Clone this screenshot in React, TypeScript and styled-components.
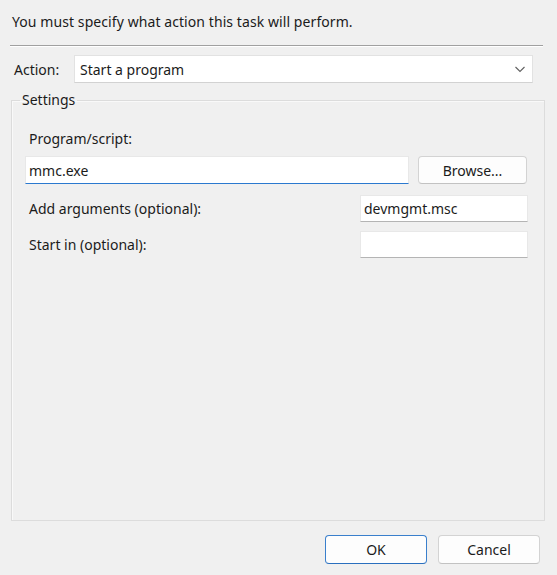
import styled, { createGlobalStyle } from 'styled-components'

const GlobalStyle = createGlobalStyle`
	html, body {
		margin: 0;
		padding: 0;
		background: #f0f0f0;
	}
	body {
		font-family: 'Noto Sans', 'Open Sans', sans-serif;
		font-size: 14px;
		color: #1b1b1b;
	}
`

const Page = styled.div`
	width: 557px;
	height: 575px;
	box-sizing: border-box;
	padding-top: 12px;
	display: flex;
	flex-direction: column;
	background: #f0f0f0;
`

const Intro = styled.div`
	margin-left: 12px;
	height: 20px;
	line-height: 20px;
	letter-spacing: 0.08px;
`

const Rule = styled.div`
	margin: 13px 14px 0 10px;
	height: 1px;
	background: #a0a0a0;
	border-bottom: 1px solid #ffffff;
`

const ActionRow = styled.div`
	display: flex;
	align-items: center;
	margin-top: 8px;
	height: 28px;
`

const ActionLabel = styled.span`
	width: 60px;
	margin-left: 14px;
`

const Dropdown = styled.div`
	width: 459px;
	height: 28px;
	box-sizing: border-box;
	display: flex;
	align-items: center;
	justify-content: space-between;
	padding: 0 6px 0 5px;
	background: #ffffff;
	border: 1px solid #e2e2e2;
	border-bottom-color: #d2d2d2;
`

const Chevron = styled.svg`
	width: 12px;
	height: 12px;
`

const GroupBox = styled.fieldset`
	flex: 1;
	margin: 8px 12px 0 11px;
	padding: 0;
	min-width: 0;
	border: 1px solid #dcdcdc;
	box-shadow: inset 1px 1px 0 #f9f9f9;
`

const Legend = styled.legend`
	margin-left: 8px;
	padding: 0 2px;
	line-height: 18px;
`

const FieldLabel = styled.div<{ $top: number }>`
	margin: ${({ $top }) => $top}px 0 0 17px;
	height: 20px;
	line-height: 20px;
`

const FieldRow = styled.div<{ $top: number; $height: number }>`
	display: flex;
	align-items: center;
	margin-top: ${({ $top }) => $top}px;
	height: ${({ $height }) => $height}px;
`

const RowLabel = styled.span`
	width: 331px;
	margin-left: 17px;
`

const TextBox = styled.input<{ $width: number; $focused?: boolean }>`
	width: ${({ $width }) => $width}px;
	height: 100%;
	box-sizing: border-box;
	margin: 0;
	padding: 0 3px;
	font: inherit;
	color: #1b1b1b;
	background: #ffffff;
	border: 1px solid #e8e8e8;
	border-bottom: 1px solid ${({ $focused }) => ($focused ? '#2b79cf' : '#b4b4b4')};
	outline: none;
`

const ProgramBox = styled(TextBox)`
	margin-left: 13px;
`

const PushButton = styled.button<{ $primary?: boolean; $width: number }>`
	width: ${({ $width }) => $width}px;
	height: 100%;
	box-sizing: border-box;
	font: inherit;
	color: #1b1b1b;
	background: #fdfdfd;
	border: 1px solid ${({ $primary }) => ($primary ? '#3a7fcc' : '#d3d3d3')};
	border-bottom-color: ${({ $primary }) => ($primary ? '#2a6fbe' : '#c2c2c2')};
	border-radius: 4px;
	padding: 0;
`

const BrowseButton = styled(PushButton)`
	margin-left: 9px;
`

const Footer = styled.div`
	display: flex;
	justify-content: flex-end;
	gap: 11px;
	height: 29px;
	margin-top: 14px;
	padding: 0 17px 11px 0;
`

export default function App() {
	return (
		<>
			<GlobalStyle />
			<Page>
				<Intro>You must specify what action this task will perform.</Intro>
				<Rule />
				<ActionRow>
					<ActionLabel>Action:</ActionLabel>
					<Dropdown>
						<span>Start a program</span>
						<Chevron viewBox="0 0 12 12">
							<path d="M1.5 4 L6 8.5 L10.5 4" fill="none" stroke="#606060" strokeWidth="1.1" />
						</Chevron>
					</Dropdown>
				</ActionRow>
				<GroupBox>
					<Legend>Settings</Legend>
					<FieldLabel $top={20}>Program/script:</FieldLabel>
					<FieldRow $top={7} $height={28}>
						<ProgramBox $width={384} $focused readOnly value="mmc.exe" />
						<BrowseButton $width={109}>Browse...</BrowseButton>
					</FieldRow>
					<FieldRow $top={11} $height={27}>
						<RowLabel>Add arguments (optional):</RowLabel>
						<TextBox $width={168} readOnly value="devmgmt.msc" />
					</FieldRow>
					<FieldRow $top={9} $height={27}>
						<RowLabel>Start in (optional):</RowLabel>
						<TextBox $width={168} readOnly value="" />
					</FieldRow>
				</GroupBox>
				<Footer>
					<PushButton $primary $width={102}>OK</PushButton>
					<PushButton $width={102}>Cancel</PushButton>
				</Footer>
			</Page>
		</>
	)
}
